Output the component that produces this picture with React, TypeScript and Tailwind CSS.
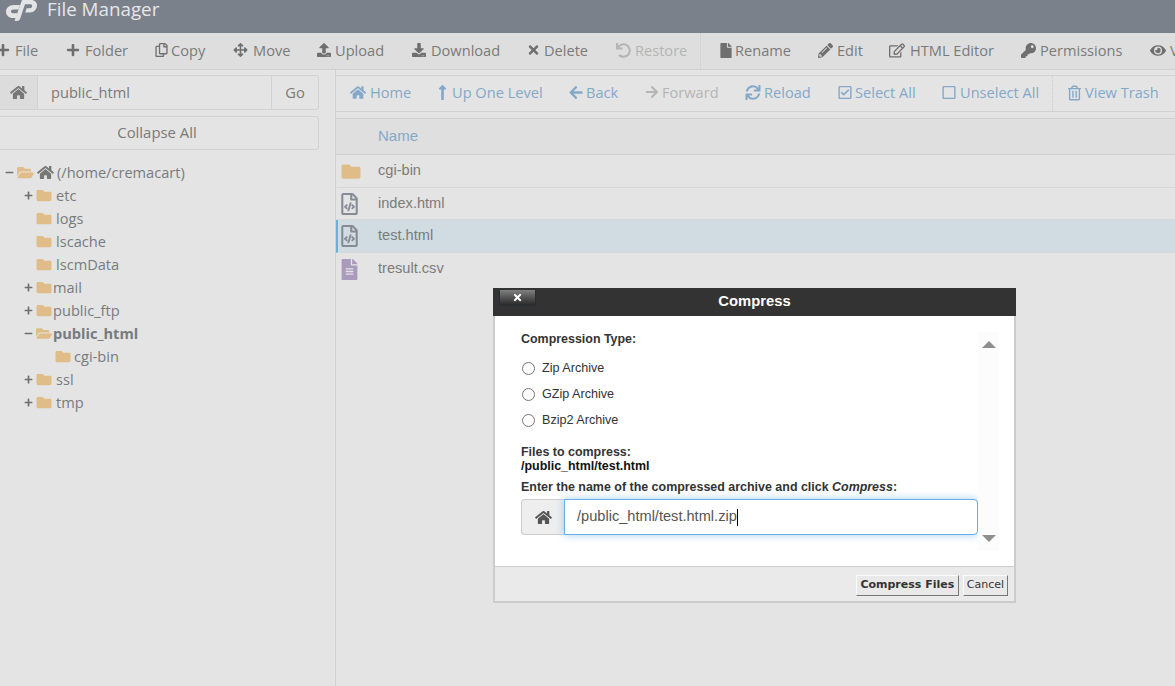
import React from "react";
import {
  FaPlus, FaRegCopy, FaArrowsAlt, FaUpload, FaDownload, FaTimes, FaUndo, FaFile, FaPencilAlt, FaRegEdit, FaKey, FaEye,
  FaHome, FaLongArrowAltUp, FaArrowLeft, FaArrowRight, FaSync, FaRegCheckSquare, FaRegSquare, FaRegTrashAlt,
  FaFolder, FaFolderOpen, FaRegFileCode, FaFileAlt, FaMinus,
} from "react-icons/fa";

const top = [
  { i: FaPlus, t: "File", w: 14, g: 5, s: 70 }, { i: FaPlus, t: "Folder", w: 14, g: 5, s: 89 }, { i: FaRegCopy, t: "Copy", w: 13, g: 3, s: 78 },
  { i: FaArrowsAlt, t: "Move", w: 15, g: 5, s: 83 }, { i: FaUpload, t: "Upload", w: 16, g: 3, s: 95 }, { i: FaDownload, t: "Download", w: 16, g: 4, s: 116 },
  { i: FaTimes, t: "Delete", w: 13, g: 4, s: 88 },
];
const top2 = [
  { i: FaFile, t: "Rename", w: 12, g: 3, s: 98 }, { i: FaPencilAlt, t: "Edit", w: 15, g: 4, s: 71 }, { i: FaRegEdit, t: "HTML Editor", w: 16, g: 5, s: 132 },
  { i: FaKey, t: "Permissions", w: 15, g: 4, s: 129 }, { i: FaEye, t: "View", w: 16, g: 4, s: 60 },
];
const nav = [
  { i: FaHome, t: "Home", w: 16, g: 4, s: 88 }, { i: FaLongArrowAltUp, t: "Up One Level", w: 9, g: 5, s: 131 }, { i: FaArrowLeft, t: "Back", w: 14, g: 3, s: 76 },
];
const nav2 = [
  { i: FaSync, t: "Reload", w: 16, g: 3, s: 93 }, { i: FaRegCheckSquare, t: "Select All", w: 14, g: 3, s: 104 }, { i: FaRegSquare, t: "Unselect All", w: 14, g: 4, s: 110 },
];

function Logo() {
  return (
    <svg viewBox="0 0 31 21" className="w-[31px] h-[21px] shrink-0" fill="#e3e4e6">
      <path d="M14 5 H8 C3 5 0 8 0 11.5 C0 15.5 3 18 7 18 H10 L11.6 13.2 H7.5 C5.8 13.2 5 12.5 5 11.4 C5 10.2 6 9.5 7.5 9.5 H12.6 Z" />
      <path d="M16 0 H25 C29 0 31 2.5 31 5.5 C31 9 28 12.5 24 12.5 H19.2 L20.6 8.2 H23.8 C25.4 8.2 26.2 7 26.2 5.8 C26.2 4.8 25.5 4.2 24.3 4.2 H19 L14 19 C13.5 20.3 12.4 21 11 21 H8.5 Z" />
    </svg>
  );
}

function TreeRow({ exp, text, indent, gap, bold }: { exp?: "+" | "-"; text: string; indent: number; gap: number; bold?: boolean }) {
  const Folder = exp === "-" ? FaFolderOpen : FaFolder;
  return (
    <div className="h-[23px] flex items-center" style={{ paddingLeft: indent }}>
      <span className="w-[12px] flex items-center shrink-0 text-[#6f6f6f]">
        {exp === "+" && <FaPlus className="w-[9px] h-[9px]" />}
        {exp === "-" && <FaMinus className="w-[9px] h-[9px]" />}
      </span>
      <Folder className="w-[16px] h-[15px] text-[#e0bd88] shrink-0" />
      <span className={"text-[14.6px] leading-[23px] text-[#777b80] " + (bold ? "font-bold" : "")} style={{ marginLeft: gap }}>{text}</span>
    </div>
  );
}

function FileRow({ kind, name, sel, last, tall }: { kind: "folder" | "code" | "text"; name: string; sel?: boolean; last?: boolean; tall?: boolean }) {
  return (
    <div className={"flex items-center " + (tall ? "h-[33px] " : "h-[32px] ") + (sel ? "bg-[#d0dbe2] border-l-2 border-[#69b2d6] " : "border-l-2 border-transparent ") + (last ? "" : "border-b border-b-[#d8d8d8]")}>
      <span className="w-[40px] pl-[2px] flex items-center shrink-0">
        {kind === "folder" && <FaFolder className="w-[22px] h-[19px] text-[#e0bd88]" />}
        {kind === "code" && <FaRegFileCode className="w-[17px] h-[22px] text-[#868b96] ml-[1px]" />}
        {kind === "text" && <FaFileAlt className="w-[17px] h-[21px] text-[#a99bbb] ml-[1px]" />}
      </span>
      <span className="font-['Liberation_Sans',sans-serif] text-[14.6px] text-[#7b7b7b]">{name}</span>
    </div>
  );
}

export default function App() {
  return (
    <div className="relative w-[1175px] h-[686px] overflow-hidden bg-[#e4e4e4] font-['Open_Sans',sans-serif]">
      <header className="h-[33px] bg-[#7b818b] flex items-start pl-[6px]">
        <Logo />
        <span className="ml-[10px] text-[18.8px] leading-[19px] text-[#e6e7e9]">File Manager</span>
      </header>

      <div className="h-[37px] bg-[#dedede] border-b border-[#cfcfcf] flex items-center whitespace-nowrap text-[14.6px] text-[#7a7a7a] -ml-[4px]">
        <div className="flex items-center h-full pb-[1px]">
          {top.map((b) => (
            <span key={b.t} className="flex items-center shrink-0" style={{ gap: b.g, width: b.s }}>
              <b.i className="h-[14px] text-[#6f6f6f]" style={{ width: b.w }} />
              {b.t}
            </span>
          ))}
          <span className="flex items-center gap-[3px] w-[85px] shrink-0 text-[#b5b5b5]">
            <FaUndo className="w-[17px] h-[15px]" />
            Restore
          </span>
        </div>
        <div className="flex items-center pl-[19px] h-full pb-[1px] border-l border-dotted border-[#cccccc]">
          {top2.map((b) => (
            <span key={b.t} className="flex items-center shrink-0" style={{ gap: b.g, width: b.s }}>
              <b.i className="h-[15px] text-[#6f6f6f]" style={{ width: b.w }} />
              {b.t}
            </span>
          ))}
        </div>
      </div>

      <div className="flex h-[616px]">
        <aside className="w-[336px] shrink-0 pr-[16px] pt-[5px] border-r border-[#d2d2d2]">
          <div className="h-[35px] flex border border-l-0 border-[#d2d2d2] rounded-r-[3px] text-[14.7px] text-[#7a7a7a]">
            <span className="w-[38px] bg-[#dcdcdc] border-r border-[#d2d2d2] flex items-center justify-center">
              <FaHome className="w-[17px] h-[15px] text-[#777777]" />
            </span>
            <span className="flex-1 pl-[13px] flex items-center text-[14.6px]">public_html</span>
            <span className="w-[47px] border-l border-[#d2d2d2] flex items-center justify-center">Go</span>
          </div>
          <div className="mt-[6px] h-[34px] pb-[2px] pr-[4px] flex items-center justify-center border border-l-0 border-[#d2d2d2] rounded-r-[3px] text-[14.9px] text-[#7a7a7a]">
            Collapse All
          </div>
          <div className="mt-[11px]">
            <div className="h-[23px] flex items-center pl-[5px]">
              <FaMinus className="w-[9px] h-[9px] text-[#6f6f6f] mr-[3px]" />
              <FaFolderOpen className="w-[17px] h-[15px] text-[#e0bd88]" />
              <FaHome className="w-[17px] h-[15px] text-[#777777] ml-[3px]" />
              <span className="ml-[3px] text-[14.6px] text-[#777b80]">(/home/cremacart)</span>
            </div>
            <TreeRow exp="+" text="etc" indent={24} gap={4} />
            <TreeRow text="logs" indent={24} gap={4} />
            <TreeRow text="lscache" indent={24} gap={4} />
            <TreeRow text="lscmData" indent={24} gap={4} />
            <TreeRow exp="+" text="mail" indent={24} gap={1} />
            <TreeRow exp="+" text="public_ftp" indent={24} gap={1} />
            <TreeRow exp="-" text="public_html" indent={24} gap={1} bold />
            <TreeRow text="cgi-bin" indent={43} gap={3} />
            <TreeRow exp="+" text="ssl" indent={24} gap={4} />
            <TreeRow exp="+" text="tmp" indent={24} gap={4} />
          </div>
        </aside>

        <main className="flex-1 min-w-0">
          <div className="mt-[5px] h-[37px] flex items-center border-y border-[#d2d2d2] pl-[14px] text-[14.6px] text-[#85a8c8] whitespace-nowrap">
            <div className="flex items-center h-full pb-[2px]">
              {nav.map((b) => (
                <span key={b.t} className="flex items-center shrink-0" style={{ gap: b.g, width: b.s }}>
                  <b.i className={b.i === FaLongArrowAltUp ? "h-[17px]" : "h-[15px]"} style={{ width: b.w }} />
                  {b.t}
                </span>
              ))}
              <span className="flex items-center gap-[3px] w-[100px] shrink-0 text-[#b5b5b5]">
                <FaArrowRight className="w-[14px] h-[14px]" />
                Forward
              </span>
              {nav2.map((b) => (
                <span key={b.t} className="flex items-center shrink-0" style={{ gap: b.g, width: b.s }}>
                  <b.i className="h-[15px]" style={{ width: b.w }} />
                  {b.t}
                </span>
              ))}
            </div>
            <div className="flex items-center gap-[4px] pl-[15px] h-full pb-[2px] border-l border-dotted border-[#cccccc]">
              <FaRegTrashAlt className="w-[13px] h-[16px]" />
              View Trash
            </div>
          </div>
          <div className="mt-[6px] h-[37px] bg-[#dfdfdf] border-y border-[#d0d0d0] flex items-center pl-[42px] font-['Liberation_Sans',sans-serif] text-[15px] text-[#85a8c8]">
            Name
          </div>
          <FileRow kind="folder" name="cgi-bin" tall />
          <FileRow kind="code" name="index.html" />
          <FileRow kind="code" name="test.html" sel tall />
          <FileRow kind="text" name="tresult.csv" last />
        </main>
      </div>

      {/* Compress dialog */}
      <div className="absolute left-[493px] top-[288px] w-[523px] h-[315px] flex flex-col bg-white border-2 border-t-0 border-[#cccccc] font-['Liberation_Sans',sans-serif] text-[12.45px] text-[#333333]">
        <div className="-mx-[2px] h-[28px] pb-[2px] shrink-0 bg-[#333333] relative flex items-center justify-center text-[14.8px] font-bold text-white">
          <span className="absolute left-[6px] top-[2px] w-[37px] h-[16px] rounded-b-[3px] border border-t-0 border-[#272f33] bg-gradient-to-b from-[#808080] to-[#2b2b2b] flex items-center justify-center">
            <FaTimes className="w-[11px] h-[11px] text-white" />
          </span>
          <span>Compress</span>
        </div>
        <div className="flex-1 relative pl-[26px] pt-[15px] min-h-0">
          <div className="font-bold leading-[16px]">Compression Type:</div>
          <div className="mt-[14px] flex flex-col gap-[12px] pl-[1px] text-[12.6px]">
            {["Zip Archive", "GZip Archive", "Bzip2 Archive"].map((t) => (
              <label key={t} className="flex items-center h-[14px] gap-[7px]">
                <span className="w-[13px] h-[13px] rounded-full border border-[#767676] bg-white shrink-0" />
                {t}
              </label>
            ))}
          </div>
          <div className="mt-[18px] font-bold leading-[14px]">Files to compress:</div>
          <div className="font-bold leading-[14px] text-[#111111]">/public_html/test.html</div>
          <div className="mt-[7px] font-bold leading-[14px]">
            Enter the name of the compressed archive and click <em>Compress</em>:
          </div>
          <div className="mt-[5px] w-[457px] h-[36px] flex">
            <span className="w-[43px] bg-[#eeeeee] border border-r-0 border-[#cccccc] rounded-l-[4px] flex items-center justify-center">
              <FaHome className="w-[17px] h-[15px] text-[#555555]" />
            </span>
            <div className="flex-1 bg-white border border-[#66afe9] rounded-r-[4px] shadow-[0_0_8px_rgba(102,175,233,0.6)] flex items-center pl-[12px] text-[14.6px] text-[#555555]">
              /public_html/test.html.zip<span className="w-px h-[17px] bg-black" />
            </div>
          </div>
          <div className="absolute right-[15px] top-[16px] w-[21px] h-[219px] bg-[#fcfcfc] flex flex-col items-center justify-between pt-[9px] pb-[9px]">
            <span className="w-0 h-0 border-x-[7px] border-x-transparent border-b-[7px] border-b-[#8f8f8f]" />
            <span className="w-0 h-0 border-x-[7px] border-x-transparent border-t-[7px] border-t-[#8f8f8f]" />
          </div>
        </div>
        <div className="h-[35px] shrink-0 bg-[#eaeaea] border-t border-[#cccccc] flex items-center justify-end gap-[4px] pr-[6px] pt-[3px]">
          <span className="h-[21px] px-[3.5px] flex items-center bg-[#e9e9e9] border border-[#fbfbfb] border-r-[#777777] border-b-[#777777] font-['DejaVu_Sans',sans-serif] font-bold text-[11px] text-[#333333]">Compress Files</span>
          <span className="h-[21px] px-[3px] flex items-center bg-[#e9e9e9] border border-[#fbfbfb] border-r-[#777777] border-b-[#777777] font-['DejaVu_Sans',sans-serif] text-[11px] text-[#333333]">Cancel</span>
        </div>
      </div>
    </div>
  );
}
